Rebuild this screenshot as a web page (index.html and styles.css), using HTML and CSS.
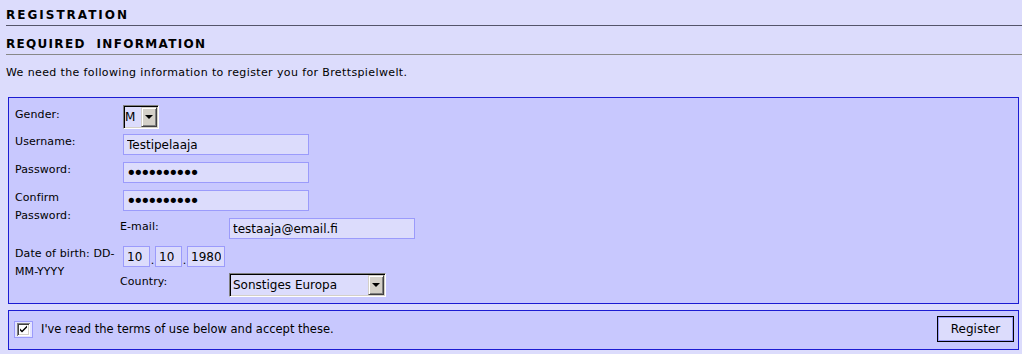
FILE: index.html
```html
<!DOCTYPE html>
<html lang="en">
<head>
<meta charset="utf-8">
<title>Registration</title>
<link rel="stylesheet" href="styles.css">
</head>
<body>
<h1 class="title">REGISTRATION</h1>
<h2 class="title title-sub">REQUIRED&nbsp; INFORMATION</h2>
<p class="intro">We need the following information to register you for Brettspielwelt.</p>
<form class="reg">
  <div class="panel fields">
    <label class="lbl pos-gender-l lbl-low">Gender:</label>
    <span class="sel sel-gender pos-gender-f"><select><option>M</option><option>F</option></select><span class="arrow"></span></span>

    <label class="lbl pos-user-l">Username:</label>
    <input class="txt pos-user-f" type="text" value="Testipelaaja">

    <label class="lbl pos-pw-l">Password:</label>
    <input class="txt pw pos-pw-f" type="password" value="secret1234">

    <label class="lbl pos-cpw-l">Confirm<br>Password:</label>
    <input class="txt pw pos-cpw-f" type="password" value="secret1234">

    <label class="lbl pos-mail-l lbl-low">E-mail:</label>
    <input class="txt pos-mail-f" id="email" type="text" value="testaaja@email.fi">

    <label class="lbl pos-dob-l">Date of birth: DD-MM-YYYY</label>
    <span class="dob pos-dob-f">
      <input class="txt d-day" type="text" value="10"><span class="dot">.</span><input class="txt d-mon" type="text" value="10"><span class="dot">.</span><input class="txt d-year" type="text" value="1980">
    </span>

    <label class="lbl pos-country-l">Country:</label>
    <span class="sel sel-country pos-country-f"><select><option>Sonstiges Europa</option></select><span class="arrow"></span></span>
  </div>

  <div class="panel accept">
    <label class="check">
      <span class="chk-outer"><svg class="chk" width="13" height="13" viewBox="0 0 13 13"><rect x="0" y="0" width="13" height="13" fill="#808080"/><rect x="1" y="1" width="12" height="12" fill="#ffffff"/><rect x="1" y="1" width="11" height="11" fill="#404040"/><rect x="2" y="2" width="10" height="10" fill="#d4d0c8"/><rect x="2" y="2" width="9" height="9" fill="#ffffff"/><path d="M3 5.5 L3 7.5 L5 9.5 L10 4.5 L10 2.5 L5 7.5 Z" fill="#000"/></svg></span>
      <span class="check-text">I've read the terms of use below and accept these.</span>
    </label>
    <button class="btn" type="button">Register</button>
  </div>
</form>
<script src="script.js"></script>
</body>
</html>
```

FILE: styles.css
```css
html, body {
  margin: 0;
  padding: 0;
}
body {
  background: #dcdcfc;
  color: #000;
  font-family: "DejaVu Sans", Verdana, sans-serif;
  font-size: 11px;
  padding: 0 0 0 6px;
  width: 1016px;
  height: 354px;
  overflow: hidden;
}
.title {
  margin: 0;
  font-size: 12px;
  font-weight: bold;
  letter-spacing: 2px;
  line-height: 16px;
  padding: 7px 0 2px;
  border-bottom: 1px solid #55556a;
}
.title-sub {
  letter-spacing: 1.3px;
  padding: 10px 0 2px;
  border-bottom-color: #888888;
}
.intro {
  margin: 9px 0 0;
  line-height: 18px;
  letter-spacing: 0.38px;
}
.reg {
  margin: 15px 3px 0 2px;
}
.panel {
  background: #c8c8fe;
  border: 1px solid #1c1cd2;
}
.fields {
  display: grid;
  grid-template-columns: 105px 106px 1fr;
  grid-template-rows: repeat(7, 28px);
  padding: 6px 6px 3px;
  align-items: start;
}
.lbl {
  line-height: 18px;
  padding-top: 1px;
  letter-spacing: 0.1px;
}
.lbl-low { padding-top: 2px; }
.pos-gender-l { grid-row: 1; grid-column: 1; }
.pos-gender-f { grid-row: 1; grid-column: 2 / 4; }
.pos-user-l { grid-row: 2; grid-column: 1; }
.pos-user-f { grid-row: 2; grid-column: 2 / 4; }
.pos-pw-l { grid-row: 3; grid-column: 1; }
.pos-pw-f { grid-row: 3; grid-column: 2 / 4; }
.pos-cpw-l { grid-row: 4 / 6; grid-column: 1; }
.pos-cpw-f { grid-row: 4; grid-column: 2 / 4; }
.pos-mail-l { grid-row: 5; grid-column: 2; }
.pos-mail-f { grid-row: 5; grid-column: 3; }
.pos-dob-l { grid-row: 6 / 8; grid-column: 1; }
.pos-dob-f { grid-row: 6; grid-column: 2 / 4; }
.pos-country-l { grid-row: 7; grid-column: 2; }
.pos-country-f { grid-row: 7; grid-column: 3; }

.txt {
  box-sizing: border-box;
  width: 186px;
  height: 21px;
  margin: 2px 0 0 3px;
  padding: 0 3px;
  border: 1px solid #9b9bfb;
  background: #dcdcfc;
  font-family: "DejaVu Sans", Verdana, sans-serif;
  font-size: 12px;
  color: #000;
  caret-color: #000;
  outline: none;
  justify-self: start;
}
.pw {
  font-size: 18px;
  letter-spacing: -3.6px;
  padding-left: 2px;
}
.dob {
  display: flex;
  align-items: flex-end;
  justify-self: start;
}
.dob .txt { margin-left: 0; }
.dob .d-day { margin-left: 3px; width: 27px; }
.dob .d-mon { width: 27px; }
.dob .d-year { width: 38px; }
.dot {
  width: 5px;
  text-align: center;
  font-size: 11px;
  line-height: 12px;
}

.sel {
  position: relative;
  display: inline-block;
  box-sizing: border-box;
  margin: 1px 0 0 3px;
  height: 24px;
  justify-self: start;
}
.sel select {
  appearance: none;
  -webkit-appearance: none;
  box-sizing: border-box;
  width: 100%;
  height: 100%;
  margin: 0;
  padding: 0 0 0 3px;
  border: 1px solid;
  border-color: #808080 #ffffff #ffffff #808080;
  box-shadow: inset 1px 1px 0 #000, inset -1px -1px 0 #d4d0c8;
  border-radius: 0;
  background: #dcdcfc;
  font-family: "DejaVu Sans", Verdana, sans-serif;
  font-size: 12px;
  color: #000;
  outline: none;
}
.sel-gender { width: 36px; }
.sel-gender select { padding-left: 1px; }
.sel-country { width: 157px; }
.arrow {
  position: absolute;
  top: 2px;
  bottom: 2px;
  right: 2px;
  width: 16px;
  box-sizing: border-box;
  background: #d4d0c8;
  border: 1px solid;
  border-color: #d4d0c8 #404040 #404040 #d4d0c8;
  box-shadow: inset 1px 1px 0 #ffffff, inset -1px -1px 0 #808080;
  pointer-events: none;
}
.arrow::after {
  content: "";
  position: absolute;
  left: 50%;
  top: 50%;
  margin: -2px 0 0 -4px;
  border-left: 4px solid transparent;
  border-right: 4px solid transparent;
  border-top: 4px solid #000;
  width: 0;
  height: 0;
}

.accept {
  margin-top: 6px;
  display: flex;
  align-items: center;
  justify-content: space-between;
  padding: 5px 4px 7px 5px;
}
.check {
  display: flex;
  align-items: center;
  gap: 8px;
  font-size: 11.5px;
}
.chk-outer {
  box-sizing: border-box;
  width: 19px;
  height: 17px;
  border: 1px solid #9b9bfb;
  background: #e4e4ff;
  display: flex;
  align-items: center;
  justify-content: center;
}
.chk { display: block; }
.btn {
  box-sizing: border-box;
  width: 77px;
  height: 26px;
  border: 1px solid #000;
  box-shadow: inset 0 0 0 1px #9b9bfb;
  background: #dcdcfc;
  font-family: "DejaVu Sans", Verdana, sans-serif;
  font-size: 12px;
  color: #000;
  padding: 0;
  border-radius: 0;
}
```

FILE: script.js
```js
var mail = document.getElementById('email');
if (mail) {
  mail.focus();
  var end = mail.value.length;
  mail.setSelectionRange(end, end);
}
```
